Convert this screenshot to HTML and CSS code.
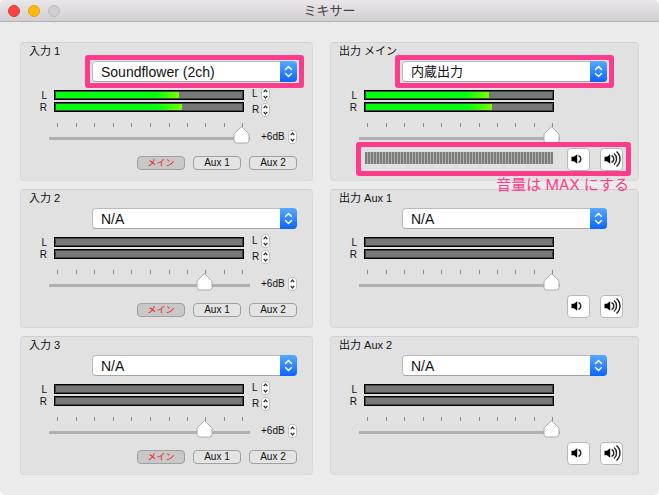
FILE: index.html
```html
<!DOCTYPE html>
<html lang="ja">
<head>
  <meta charset="UTF-8" />
  <meta name="viewport" content="width=device-width, initial-scale=1" />
  <title>ミキサー</title>
  <link rel="stylesheet" href="styles.css">
</head>
<body>
  <!-- shared icons -->
  <svg class="icon-defs" aria-hidden="true">
    <symbol id="up" viewBox="0 0 9 7"><path d="M2.7 5.2 L4.5 3 L6.3 5.2" /></symbol>
    <symbol id="down" viewBox="0 0 9 7"><path d="M2.7 1.8 L4.5 4 L6.3 1.8" /></symbol>
    <symbol id="updown" viewBox="0 0 17 21"><path d="M5.5 8.5 L8.5 5.5 L11.5 8.5 M5.5 12.5 L8.5 15.5 L11.5 12.5" /></symbol>
    <symbol id="ticks" viewBox="0 0 186 4">
      <path d="M.5 0v4M19.5 0v4M37.5 0v4M56.5 0v4M74.5 0v4M93.5 0v4M112.5 0v4M130.5 0v4M148.5 0v4M167.5 0v4M185.5 0v4" />
    </symbol>
    <symbol id="vol-low" viewBox="0 0 21 21">
      <path class="cone" d="M3.5 7.8h2.5L9.2 5.2v9.6L6 12.2H3.5z" />
      <path class="wave" d="M10.5 6.6c3 1 3 5.8 0 6.8" />
    </symbol>
    <symbol id="vol-high" viewBox="0 0 21 21">
      <path class="cone" d="M3.5 7.8h2.5L9.2 5.2v9.6L6 12.2H3.5z" />
      <path class="wave" d="M10.5 6.6c3 1 3 5.8 0 6.8M13 4.5c3.4 2.6 3.4 8.4 0 11M15.5 2.5c4.6 4 4.6 11 0 15" />
    </symbol>
  </svg>

  <div class="window">
    <header class="titlebar">
      <div class="lights">
        <button class="light close" aria-label="閉じる"></button>
        <button class="light minimize" aria-label="しまう"></button>
        <button class="light zoom" aria-label="拡大" disabled></button>
      </div>
      <h1>ミキサー</h1>
    </header>

    <main class="mixer">
      <section class="channel input">
        <h2><label for="in1">入力 1</label></h2>
        <div class="device marked">
          <select id="in1"><option>Soundflower (2ch)</option></select>
          <svg><use href="#updown" /></svg>
        </div>
        <div class="levels">
          <div class="sides"><span>L</span><span>R</span></div>
          <div class="meters">
            <div class="meter"><div class="level" style="width:66%"></div></div>
            <div class="meter"><div class="level" style="width:68%"></div></div>
          </div>
          <div class="pans">
            <div class="pan"><span>L</span><div class="stepper"><button aria-label="L 上"><svg><use href="#up" /></svg></button><button aria-label="L 下"><svg><use href="#down" /></svg></button></div></div>
            <div class="pan"><span>R</span><div class="stepper"><button aria-label="R 上"><svg><use href="#up" /></svg></button><button aria-label="R 下"><svg><use href="#down" /></svg></button></div></div>
          </div>
        </div>
        <div class="fader-row">
          <div class="fader">
            <svg class="ticks"><use href="#ticks" /></svg>
            <input type="range" min="0" max="10" value="10" aria-label="入力 1 音量">
          </div>
          <span class="gain">+6dB</span>
          <div class="stepper"><button aria-label="ゲイン 上"><svg><use href="#up" /></svg></button><button aria-label="ゲイン 下"><svg><use href="#down" /></svg></button></div>
        </div>
        <div class="routes">
          <button class="route on">メイン</button>
          <button class="route">Aux 1</button>
          <button class="route">Aux 2</button>
        </div>
      </section>

      <section class="channel output">
        <h2><label for="out1">出力 メイン</label></h2>
        <div class="device marked">
          <select id="out1" class="ja"><option>内蔵出力</option></select>
          <svg><use href="#updown" /></svg>
        </div>
        <div class="levels">
          <div class="sides"><span>L</span><span>R</span></div>
          <div class="meters">
            <div class="meter"><div class="level" style="width:66%"></div></div>
            <div class="meter"><div class="level" style="width:68%"></div></div>
          </div>
        </div>
        <div class="fader-row">
          <div class="fader">
            <svg class="ticks"><use href="#ticks" /></svg>
            <input type="range" min="0" max="10" value="10" aria-label="出力 メイン 音量">
          </div>
        </div>
        <div class="volume marked">
          <div class="volume-bar"></div>
          <button class="vol-btn" aria-label="音量を下げる"><svg><use href="#vol-low" /></svg></button>
          <button class="vol-btn" aria-label="音量を上げる"><svg><use href="#vol-high" /></svg></button>
          <p class="note">音量は MAX にする</p>
        </div>
      </section>

      <section class="channel input">
        <h2><label for="in2">入力 2</label></h2>
        <div class="device">
          <select id="in2"><option>N/A</option></select>
          <svg><use href="#updown" /></svg>
        </div>
        <div class="levels">
          <div class="sides"><span>L</span><span>R</span></div>
          <div class="meters">
            <div class="meter"></div>
            <div class="meter"></div>
          </div>
          <div class="pans">
            <div class="pan"><span>L</span><div class="stepper"><button aria-label="L 上"><svg><use href="#up" /></svg></button><button aria-label="L 下"><svg><use href="#down" /></svg></button></div></div>
            <div class="pan"><span>R</span><div class="stepper"><button aria-label="R 上"><svg><use href="#up" /></svg></button><button aria-label="R 下"><svg><use href="#down" /></svg></button></div></div>
          </div>
        </div>
        <div class="fader-row">
          <div class="fader">
            <svg class="ticks"><use href="#ticks" /></svg>
            <input type="range" min="0" max="10" value="8" aria-label="入力 2 音量">
          </div>
          <span class="gain">+6dB</span>
          <div class="stepper"><button aria-label="ゲイン 上"><svg><use href="#up" /></svg></button><button aria-label="ゲイン 下"><svg><use href="#down" /></svg></button></div>
        </div>
        <div class="routes">
          <button class="route on">メイン</button>
          <button class="route">Aux 1</button>
          <button class="route">Aux 2</button>
        </div>
      </section>

      <section class="channel output">
        <h2><label for="out2">出力 Aux 1</label></h2>
        <div class="device">
          <select id="out2"><option>N/A</option></select>
          <svg><use href="#updown" /></svg>
        </div>
        <div class="levels">
          <div class="sides"><span>L</span><span>R</span></div>
          <div class="meters">
            <div class="meter"></div>
            <div class="meter"></div>
          </div>
        </div>
        <div class="fader-row">
          <div class="fader">
            <svg class="ticks"><use href="#ticks" /></svg>
            <input type="range" min="0" max="10" value="10" aria-label="出力 Aux 1 音量">
          </div>
        </div>
        <div class="volume">
          <button class="vol-btn" aria-label="音量を下げる"><svg><use href="#vol-low" /></svg></button>
          <button class="vol-btn" aria-label="音量を上げる"><svg><use href="#vol-high" /></svg></button>
        </div>
      </section>

      <section class="channel input">
        <h2><label for="in3">入力 3</label></h2>
        <div class="device">
          <select id="in3"><option>N/A</option></select>
          <svg><use href="#updown" /></svg>
        </div>
        <div class="levels">
          <div class="sides"><span>L</span><span>R</span></div>
          <div class="meters">
            <div class="meter"></div>
            <div class="meter"></div>
          </div>
          <div class="pans">
            <div class="pan"><span>L</span><div class="stepper"><button aria-label="L 上"><svg><use href="#up" /></svg></button><button aria-label="L 下"><svg><use href="#down" /></svg></button></div></div>
            <div class="pan"><span>R</span><div class="stepper"><button aria-label="R 上"><svg><use href="#up" /></svg></button><button aria-label="R 下"><svg><use href="#down" /></svg></button></div></div>
          </div>
        </div>
        <div class="fader-row">
          <div class="fader">
            <svg class="ticks"><use href="#ticks" /></svg>
            <input type="range" min="0" max="10" value="8" aria-label="入力 3 音量">
          </div>
          <span class="gain">+6dB</span>
          <div class="stepper"><button aria-label="ゲイン 上"><svg><use href="#up" /></svg></button><button aria-label="ゲイン 下"><svg><use href="#down" /></svg></button></div>
        </div>
        <div class="routes">
          <button class="route on">メイン</button>
          <button class="route">Aux 1</button>
          <button class="route">Aux 2</button>
        </div>
      </section>

      <section class="channel output">
        <h2><label for="out3">出力 Aux 2</label></h2>
        <div class="device">
          <select id="out3"><option>N/A</option></select>
          <svg><use href="#updown" /></svg>
        </div>
        <div class="levels">
          <div class="sides"><span>L</span><span>R</span></div>
          <div class="meters">
            <div class="meter"></div>
            <div class="meter"></div>
          </div>
        </div>
        <div class="fader-row">
          <div class="fader">
            <svg class="ticks"><use href="#ticks" /></svg>
            <input type="range" min="0" max="10" value="10" aria-label="出力 Aux 2 音量">
          </div>
        </div>
        <div class="volume">
          <button class="vol-btn" aria-label="音量を下げる"><svg><use href="#vol-low" /></svg></button>
          <button class="vol-btn" aria-label="音量を上げる"><svg><use href="#vol-high" /></svg></button>
        </div>
      </section>
    </main>
  </div>
</body>
</html>
```

FILE: styles.css
```css
* {
  box-sizing: border-box;
}

body {
  margin: 0;
  background: #fff;
  color: #111;
  font-family: "Liberation Sans", "Noto Sans CJK JP", sans-serif;
  font-size: 10px;
}

button {
  padding: 0;
  border: none;
  background: none;
  color: inherit;
  font: inherit;
}

svg {
  display: block;
  fill: none;
}

.icon-defs {
  position: absolute;
  width: 0;
  height: 0;
}

.window {
  min-height: 100vh;
  background: #ebebeb;
  border-radius: 5px;
  overflow: hidden;
}

/* title bar */
.titlebar {
  display: grid;
  grid-template-columns: 60px 1fr 60px;
  align-items: center;
  height: 22px;
  background: linear-gradient(#e9e7e9, #d1cfd1);
  border-bottom: 1px solid #b3b1b3;
}

.lights {
  display: flex;
  gap: 8px;
  padding-left: 8px;
}

.light {
  width: 12px;
  height: 12px;
  border-radius: 50%;
  border: 1px solid;
}

.close {
  background: #fc4444;
  border-color: #e03538;
}

.minimize {
  background: #fdbc0b;
  border-color: #e0a010;
}

.zoom {
  background: #d0ced0;
  border-color: #bcbabc;
}

h1 {
  margin: 0;
  color: #444;
  font-size: 13px;
  font-weight: normal;
  line-height: 20px;
  text-align: center;
}

/* channels */
.mixer {
  display: grid;
  grid-template-columns: 293fr 309fr;
  gap: 8px 17px;
  padding: 20px;
}

.channel {
  padding: 0 15px 9px 0;
  background: #e1e1e1;
  border: 1px solid #d9d9d9;
  border-top-color: #d0d0d0;
  border-radius: 4px;
}

h2 {
  margin: 0;
  padding-left: 8px;
  height: 18px;
  font-size: 11px;
  font-weight: normal;
  line-height: 16px;
}

.device {
  position: relative;
  height: 21px;
  margin-left: 71px;
}

.output .device {
  margin-right: 16px;
}

.device select {
  appearance: none;
  display: block;
  width: 100%;
  height: 21px;
  padding: 0 24px 0 8px;
  border: 1px solid #bbb;
  border-bottom-color: #a5a5a5;
  border-radius: 4px;
  background: #fff;
  color: #111;
  font-family: inherit;
  font-size: 14px;
}

.device select.ja {
  font-size: 13px;
}

.device svg {
  position: absolute;
  top: 0;
  right: 0;
  width: 17px;
  height: 21px;
  border-radius: 0 4px 4px 0;
  background: linear-gradient(#58a9fb, #0a66fb);
  stroke: #fff;
  stroke-width: 1.5;
  stroke-linecap: round;
  pointer-events: none;
}

/* level meters */
.levels {
  display: grid;
  grid-template-columns: 33px 1fr 53px;
  height: 30px;
  margin-top: 5px;
}

.output .levels {
  grid-template-columns: 33px 1fr 69px;
}

.sides {
  padding: 3px 7px 0 0;
  line-height: 12px;
  text-align: right;
}

.sides span {
  display: block;
}

.meters {
  display: flex;
  flex-direction: column;
  gap: 2px;
  padding-top: 3px;
}

.meter {
  height: 10px;
  border: 1px solid #000;
  background: #787878;
  box-shadow: inset 0 0 0 1px #444;
  padding: 1px;
}

.level {
  height: 6px;
  background: linear-gradient(90deg, #0f1 80%, #7f0);
}

.pans {
  display: flex;
  flex-direction: column;
  gap: 2px;
  padding-left: 8px;
}

.pan {
  display: flex;
  align-items: center;
  line-height: 14px;
}

.pan span {
  width: 9px;
}

.stepper {
  flex: none;
  width: 9px;
  height: 14px;
  border-radius: 4px;
  background: #fff;
  box-shadow: inset 0 0 0 1px #c0c0c0;
}

.stepper button,
.stepper svg {
  display: block;
  width: 9px;
  height: 7px;
}

.stepper svg {
  stroke: #333;
  stroke-width: 1.3;
}

/* faders */
.fader-row {
  display: flex;
  align-items: flex-end;
  height: 21px;
  margin-top: 6px;
  padding-left: 28px;
}

.output .fader-row {
  padding-right: 63px;
}

.fader {
  flex: 1;
}

.ticks {
  width: 186px;
  height: 4px;
  margin: 0 auto -1px;
  stroke: #8c8c8c;
}

.fader input {
  appearance: none;
  display: block;
  width: 100%;
  height: 18px;
  margin: 0;
  background: linear-gradient(#b0b0b0, #b0b0b0) 0 11px / 100% 3px no-repeat;
}

.fader input::-webkit-slider-thumb {
  appearance: none;
  width: 17px;
  height: 18px;
  background: url("data:image/svg+xml,%3Csvg xmlns='http://www.w3.org/2000/svg' viewBox='0 0 17 18'%3E%3Cpath d='M8.5 .7L15.5 7.5Q16 8 16 9V14.5Q16 17 13.5 17H3.5Q1 17 1 14.5V9Q1 8 1.5 7.5Z' fill='%23fff' stroke='%23aaa'/%3E%3C/svg%3E") no-repeat;
}

.gain {
  width: 24px;
  margin: 0 3px 0 11px;
  line-height: 14px;
}

/* routing buttons */
.routes {
  display: flex;
  justify-content: flex-end;
  gap: 8px;
  margin-top: 12px;
}

.route {
  width: 48px;
  height: 14px;
  border: 1px solid #a0a0a0;
  border-radius: 4px;
  background: #e4e4e4;
  line-height: 12px;
}

.route.on {
  background: #c8c8c8;
  color: #f01010;
  font-size: 9px;
}

/* system volume */
.volume {
  position: relative;
  display: flex;
  justify-content: flex-end;
  gap: 10px;
  margin: 4px 0 0 34px;
}

.volume-bar {
  flex: 1;
  height: 12px;
  margin: 4px 4px 0 0;
  background: repeating-linear-gradient(90deg, #7c7c7c 0 2px, #b0b0b0 2px 3px);
}

.vol-btn {
  width: 23px;
  height: 23px;
  border: 1px solid #b8b8b8;
  border-radius: 4px;
  background: #fff;
}

.vol-btn svg {
  width: 21px;
  height: 21px;
}

.cone {
  fill: #000;
}

.wave {
  stroke: #222;
  stroke-width: 1.4;
}

/* pink callouts */
.marked::after {
  content: "";
  position: absolute;
  inset: -6px -7px;
  border: 5px solid #ff3c8c;
  border-radius: 3px;
  pointer-events: none;
}

.volume.marked::after {
  inset: -6px -8px -5px -9px;
}

.note {
  position: absolute;
  z-index: 1;
  top: 28px;
  right: -6px;
  margin: 0;
  color: #ff3c8c;
  font-family: Inter, "Noto Sans CJK JP", sans-serif;
  font-size: 15px;
  line-height: 18px;
  white-space: nowrap;
}
```
